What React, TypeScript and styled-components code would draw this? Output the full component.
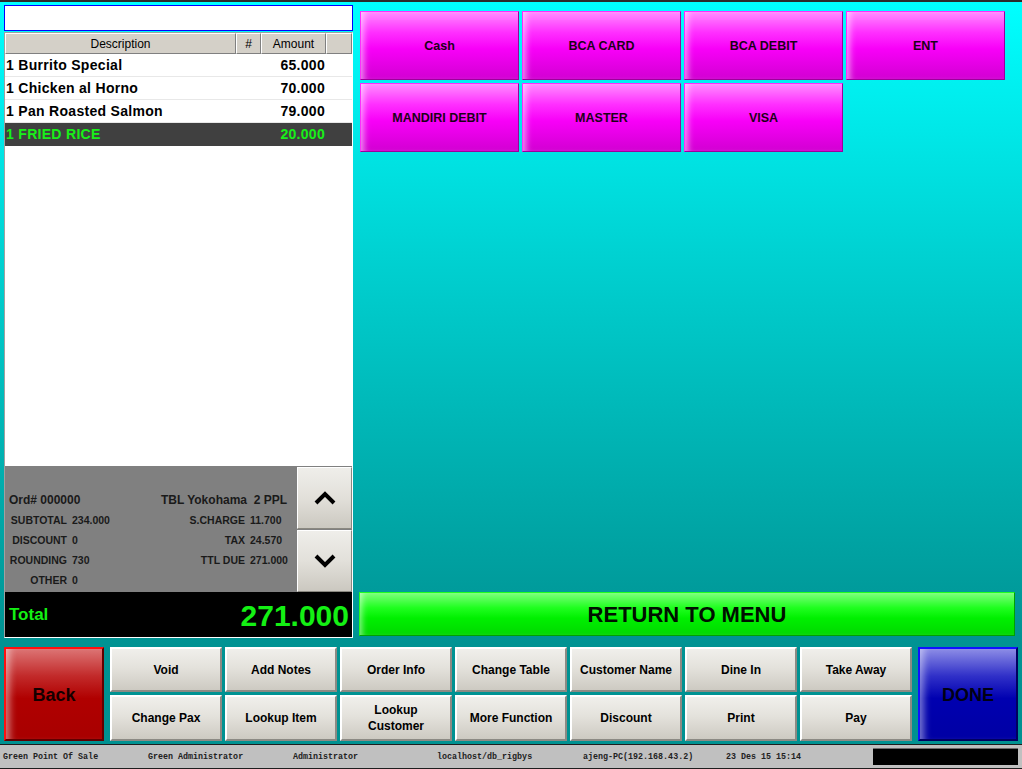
import React from 'react';
import styled, { createGlobalStyle, css } from 'styled-components';

const Global = createGlobalStyle`
  html, body { margin: 0; padding: 0; background: #009191; }
  body { font-family: "Liberation Sans", Arial, sans-serif; }
  * { box-sizing: border-box; }
`;

const Screen = styled.div`
  width: 1022px;
  height: 769px;
  display: flex;
  flex-direction: column;
  overflow: hidden;
`;

const TopStrip = styled.div`
  height: 2px;
  background: #2b2b2b;
`;

const Workspace = styled.div`
  height: 742px;
  display: flex;
  flex-direction: column;
  padding: 0 4px 3px;
  background: linear-gradient(
    to bottom,
    #00ffff 0px,
    #00d2d2 250px,
    #00a6a6 520px,
    #009393 640px,
    #009191 100%
  );
`;

const Upper = styled.div`
  height: 638px;
  display: flex;
  gap: 6px;
`;

const LeftColumn = styled.div`
  width: 349px;
  display: flex;
  flex-direction: column;
  gap: 1px;
  padding-top: 3px;
`;

const SearchBox = styled.div`
  height: 26px;
  background: #ffffff;
  border: 1px solid #0000ff;
`;

const OrderPanel = styled.div`
  height: 606px;
  display: flex;
  flex-direction: column;
  background: #ffffff;
  border: 1px solid;
  border-color: #a0a0a0 #ffffff #ffffff #a0a0a0;
`;

const columns = '231px 25px 65px 26px';

const HeaderRow = styled.div`
  display: grid;
  grid-template-columns: ${columns};
  height: 21px;
`;

const HeaderCell = styled.div`
  background: #d4d0c8;
  border: 1px solid;
  border-color: #ffffff #808080 #808080 #ffffff;
  font-size: 12px;
  color: #000;
  display: flex;
  align-items: center;
  justify-content: center;
`;

const ItemList = styled.div`
  flex: 1;
  background: #ffffff;
`;

const ItemRow = styled.div<{ $selected?: boolean }>`
  display: grid;
  grid-template-columns: ${columns};
  height: 23px;
  align-items: center;
  border-bottom: 1px solid #e8e8e8;
  font-size: 14px;
  font-weight: 700;
  letter-spacing: 0.3px;
  color: #000;
  ${(p) =>
    p.$selected &&
    css`
      background: #404040;
      color: #18f018;
      border-bottom-color: #404040;
    `}
`;

const ItemName = styled.div`
  padding-left: 1px;
  white-space: nowrap;
`;

const ItemAmount = styled.div`
  grid-column: 3;
  text-align: right;
  padding-right: 1px;
`;

const Summary = styled.div`
  height: 126px;
  display: flex;
  background: #808080;
`;

const SummaryGrid = styled.div`
  width: 292px;
  padding-top: 24px;
  display: grid;
  grid-template-columns: 62px 93px 85px 52px;
  grid-auto-rows: 20px;
  align-items: center;
  font-size: 10.5px;
  font-weight: 700;
  color: #1a1a1a;
  white-space: nowrap;
`;

const OrderNo = styled.div`
  grid-column: 1 / span 2;
  padding-left: 4px;
  font-size: 12px;
`;

const TableInfo = styled.div`
  grid-column: 3 / span 2;
  text-align: right;
  padding-right: 10px;
  font-size: 12px;
`;

const SumLabel = styled.div<{ $col: number }>`
  grid-column: ${(p) => p.$col};
  text-align: right;
`;

const SumValue = styled.div<{ $col: number }>`
  grid-column: ${(p) => p.$col};
  padding-left: 5px;
`;

const ArrowColumn = styled.div`
  width: 55px;
  display: flex;
  flex-direction: column;
  gap: 1px;
  padding-top: 1px;
`;

const ArrowButton = styled.div`
  height: 62px;
  display: flex;
  align-items: center;
  justify-content: center;
  background: linear-gradient(to bottom, #efeeea 0%, #e2e0da 50%, #cbc8c0 100%);
  border: 1px solid;
  border-color: #ffffff #8a8880 #8a8880 #ffffff;
`;

const TotalBar = styled.div`
  height: 45px;
  background: #000000;
  display: flex;
  align-items: center;
  justify-content: space-between;
  padding: 0 3px 0 4px;
  color: #14f014;
  font-weight: 700;
`;

const TotalLabel = styled.div`
  font-size: 17px;
`;

const TotalValue = styled.div`
  font-size: 30px;
  padding-top: 2px;
`;

const RightColumn = styled.div`
  flex: 1;
  display: flex;
  flex-direction: column;
  justify-content: space-between;
  padding: 9px 3px 4px 0;
`;

const TenderGrid = styled.div`
  display: grid;
  grid-template-columns: repeat(4, 159px);
  grid-auto-rows: 69px;
  gap: 3px;
  padding-left: 1px;
`;

const TenderButton = styled.div`
  display: flex;
  align-items: center;
  justify-content: center;
  font-size: 12.5px;
  font-weight: 700;
  color: #1c0018;
  border: 1px solid;
  border-color: #ff2cff #9c009c #9c009c #ff2cff;
  background: linear-gradient(to bottom, #ff8cff 0%, #ff30ff 30%, #f800f8 55%, #d200d2 100%);
  box-shadow: inset 7px 0 6px -4px rgba(255, 255, 255, 0.55);
`;

const ReturnButton = styled.div`
  height: 44px;
  display: flex;
  align-items: center;
  justify-content: center;
  padding-top: 2px;
  font-size: 22px;
  font-weight: 700;
  color: #001000;
  border: 1px solid;
  border-color: #20ff20 #00a000 #00a000 #20ff20;
  background: linear-gradient(to bottom, #7cff7c 0%, #20ff20 35%, #00f000 60%, #00d800 100%);
  box-shadow: inset 6px 0 6px -4px rgba(255, 255, 255, 0.55);
`;

const BottomBar = styled.div`
  margin-top: 7px;
  height: 94px;
  display: flex;
  gap: 6px;
`;

const BigButton = styled.div<{ $tone: 'red' | 'blue' }>`
  width: 101px;
  height: 94px;
  display: flex;
  align-items: center;
  justify-content: center;
  padding-top: 2px;
  font-size: 18px;
  font-weight: 700;
  border: 2px solid;
  ${(p) =>
    p.$tone === 'red'
      ? css`
          color: #140000;
          border-color: #ff1010 #600000 #600000 #ff1010;
          background: linear-gradient(to bottom, #dc7474 0%, #c22a2a 30%, #b00000 55%, #a80000 100%);
        `
      : css`
          color: #000014;
          border-color: #1010ff #000060 #000060 #1010ff;
          background: linear-gradient(to bottom, #8c8ce6 0%, #3030c8 30%, #0000b0 55%, #0000a4 100%);
        `}
  box-shadow: inset 9px 0 7px -5px rgba(255, 255, 255, 0.45);
`;

const FunctionGrid = styled.div`
  display: grid;
  grid-template-columns: repeat(7, 112px);
  grid-template-rows: 45px 46px;
  gap: 3px;
`;

const FunctionButton = styled.div`
  display: flex;
  align-items: center;
  justify-content: center;
  text-align: center;
  font-size: 12px;
  font-weight: 700;
  line-height: 16px;
  color: #000;
  border: 2px solid;
  border-color: #ffffff #8c8a84 #8c8a84 #ffffff;
  background: linear-gradient(to bottom, #f0efeb 0%, #e4e2dc 45%, #cdcac2 100%);
`;

const StatusBar = styled.div`
  height: 25px;
  display: flex;
  align-items: center;
  background: #c0c0c0;
  border-top: 1px solid #1e1e1e;
  border-bottom: 1px solid #1e1e1e;
  font-family: "Liberation Mono", "Courier New", monospace;
  font-size: 8.35px;
  font-weight: 700;
  color: #222;
  white-space: nowrap;
`;

const StatusCell = styled.div<{ $w: number }>`
  width: ${(p) => p.$w}px;
  padding-left: 3px;
`;

const StatusBox = styled.div`
  width: 145px;
  height: 17px;
  background: #000;
  border-top: 1px solid #6a6a6a;
`;

const Chevron = ({ up }: { up?: boolean }) => (
  <svg width="24" height="14" viewBox="0 0 24 14">
    <polyline
      points={up ? '3,12 12,3 21,12' : '3,2 12,11 21,2'}
      fill="none"
      stroke="#000"
      strokeWidth="4"
      strokeLinejoin="miter"
    />
  </svg>
);

const items = [
  { name: '1 Burrito Special', amount: '65.000' },
  { name: '1 Chicken al Horno', amount: '70.000' },
  { name: '1 Pan Roasted Salmon', amount: '79.000' },
  { name: '1 FRIED RICE', amount: '20.000', selected: true },
];

const tenders = ['Cash', 'BCA CARD', 'BCA DEBIT', 'ENT', 'MANDIRI DEBIT', 'MASTER', 'VISA'];

const functions: React.ReactNode[] = [
  'Void',
  'Add Notes',
  'Order Info',
  'Change Table',
  'Customer Name',
  'Dine In',
  'Take Away',
  'Change Pax',
  'Lookup Item',
  <>
    Lookup
    <br />
    Customer
  </>,
  'More Function',
  'Discount',
  'Print',
  'Pay',
];

const status: [string, number][] = [
  ['Green Point Of Sale', 145],
  ['Green Administrator', 145],
  ['Administrator', 144],
  ['localhost/db_rigbys', 146],
  ['ajeng-PC(192.168.43.2)', 143],
  ['23 Des 15 15:14', 150],
];

export default function App() {
  return (
    <Screen>
      <Global />
      <TopStrip />
      <Workspace>
        <Upper>
          <LeftColumn>
            <SearchBox />
            <OrderPanel>
              <HeaderRow>
                <HeaderCell>Description</HeaderCell>
                <HeaderCell>#</HeaderCell>
                <HeaderCell>Amount</HeaderCell>
                <HeaderCell />
              </HeaderRow>
              <ItemList>
                {items.map((it) => (
                  <ItemRow key={it.name} $selected={it.selected}>
                    <ItemName>{it.name}</ItemName>
                    <ItemAmount>{it.amount}</ItemAmount>
                  </ItemRow>
                ))}
              </ItemList>
              <Summary>
                <SummaryGrid>
                  <OrderNo>Ord# 000000</OrderNo>
                  <TableInfo>TBL Yokohama&nbsp;&nbsp;2 PPL</TableInfo>
                  <SumLabel $col={1}>SUBTOTAL</SumLabel>
                  <SumValue $col={2}>234.000</SumValue>
                  <SumLabel $col={3}>S.CHARGE</SumLabel>
                  <SumValue $col={4}>11.700</SumValue>
                  <SumLabel $col={1}>DISCOUNT</SumLabel>
                  <SumValue $col={2}>0</SumValue>
                  <SumLabel $col={3}>TAX</SumLabel>
                  <SumValue $col={4}>24.570</SumValue>
                  <SumLabel $col={1}>ROUNDING</SumLabel>
                  <SumValue $col={2}>730</SumValue>
                  <SumLabel $col={3}>TTL DUE</SumLabel>
                  <SumValue $col={4}>271.000</SumValue>
                  <SumLabel $col={1}>OTHER</SumLabel>
                  <SumValue $col={2}>0</SumValue>
                </SummaryGrid>
                <ArrowColumn>
                  <ArrowButton>
                    <Chevron up />
                  </ArrowButton>
                  <ArrowButton>
                    <Chevron />
                  </ArrowButton>
                </ArrowColumn>
              </Summary>
              <TotalBar>
                <TotalLabel>Total</TotalLabel>
                <TotalValue>271.000</TotalValue>
              </TotalBar>
            </OrderPanel>
          </LeftColumn>
          <RightColumn>
            <TenderGrid>
              {tenders.map((t) => (
                <TenderButton key={t}>{t}</TenderButton>
              ))}
            </TenderGrid>
            <ReturnButton>RETURN TO MENU</ReturnButton>
          </RightColumn>
        </Upper>
        <BottomBar>
          <BigButton $tone="red">Back</BigButton>
          <FunctionGrid>
            {functions.map((f, i) => (
              <FunctionButton key={i}>{f}</FunctionButton>
            ))}
          </FunctionGrid>
          <BigButton $tone="blue">DONE</BigButton>
        </BottomBar>
      </Workspace>
      <StatusBar>
        {status.map(([t, w]) => (
          <StatusCell key={t} $w={w}>
            {t}
          </StatusCell>
        ))}
        <StatusBox />
      </StatusBar>
    </Screen>
  );
}
